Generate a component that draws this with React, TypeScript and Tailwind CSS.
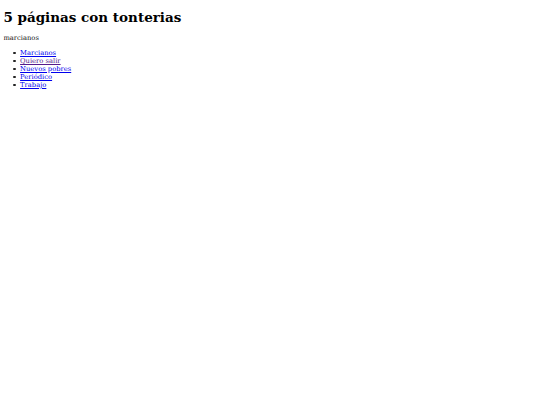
import React from 'react';

const links = [
  { label: 'Marcianos', visited: false },
  { label: 'Quiero salir', visited: true },
  { label: 'Nuevos pobres', visited: false },
  { label: 'Periódico', visited: false },
  { label: 'Trabajo', visited: false },
];

export default function App() {
  return (
    <div className="min-h-screen bg-white px-[3.4px] pb-px text-[6.75px] leading-[normal] text-black font-['DejaVu_Serif',serif]">
      <h1 className="my-[9.05px] text-[13.5px] font-bold">5 páginas con tonterias</h1>
      <p className="my-[6.75px] text-[#111]">marcianos</p>
      <ul className="my-[6.75px] pl-[9.8px]">
        {links.map(l => (
          <li key={l.label} className="flex items-center gap-[4.3px]">
            <span className="h-[2.6px] w-[2.6px] shrink-0 rounded-full bg-[#222]" />
            <a
              href="#"
              className={l.visited ? 'text-[#551a8b] underline' : 'text-[#0000ee] underline'}
            >
              {l.label}
            </a>
          </li>
        ))}
      </ul>
    </div>
  );
}
